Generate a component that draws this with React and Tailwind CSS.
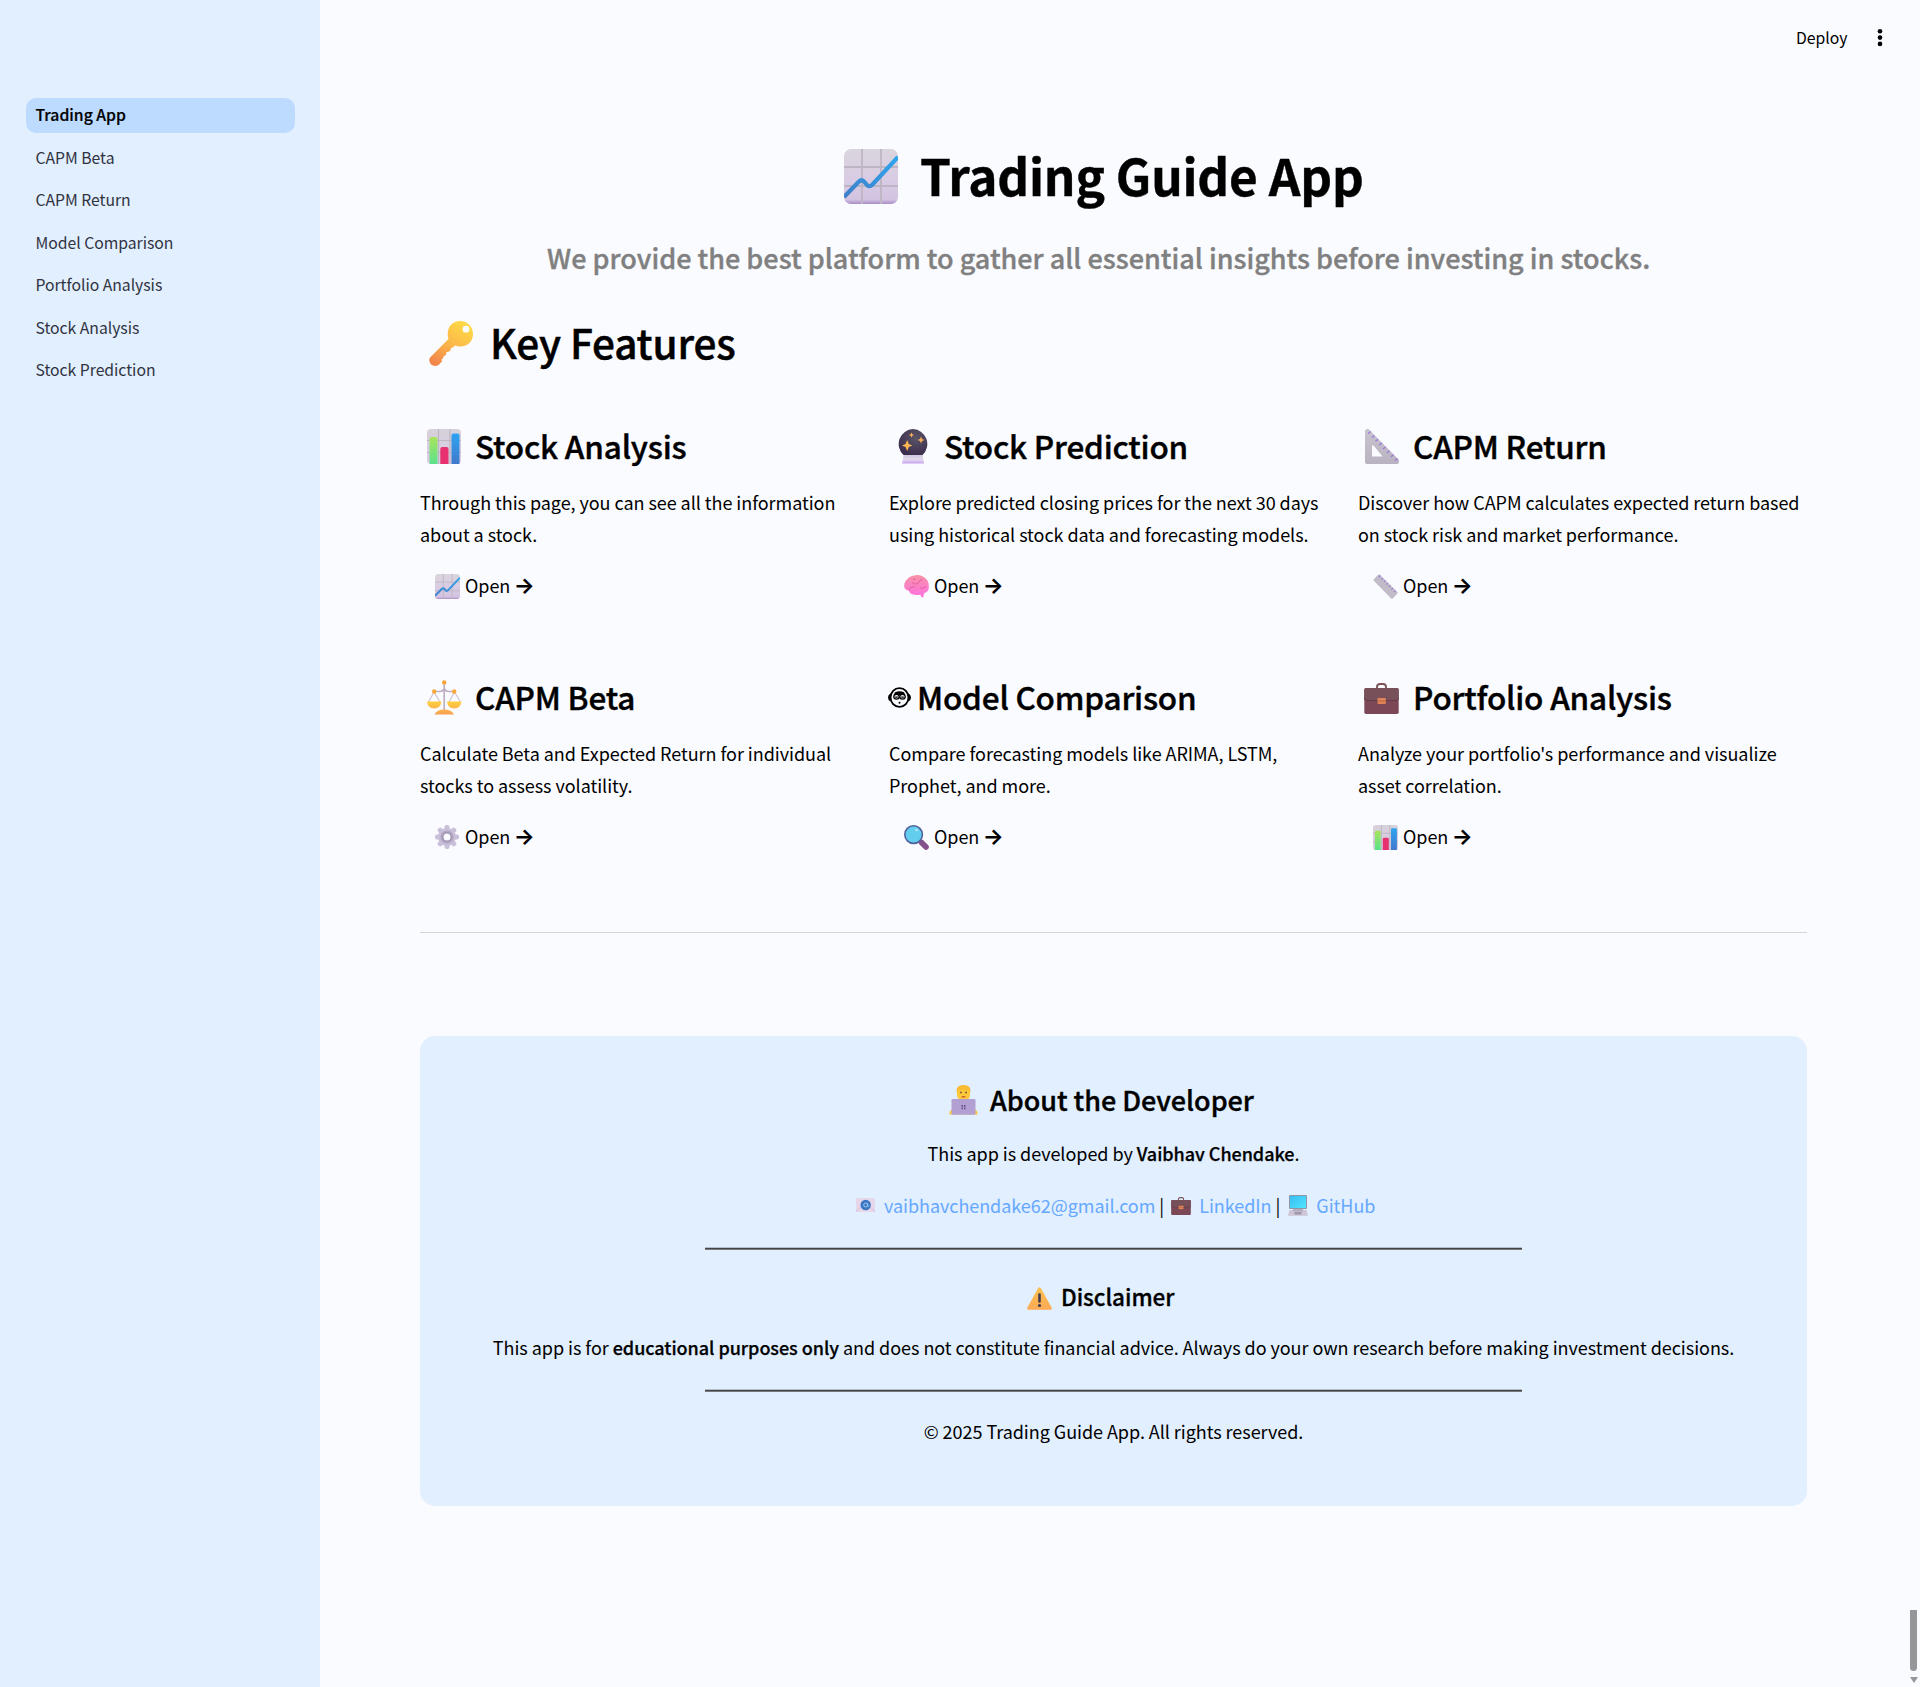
function ChartUp({ className }) {
  return (
    <svg className={className} viewBox="0 0 54 55" preserveAspectRatio="none">
      <defs>
        <linearGradient id="paper" x1="0" y1="0" x2="0" y2="1">
          <stop offset="0" stopColor="#dad5dd" />
          <stop offset="0.6" stopColor="#d8cbe4" />
          <stop offset="0.92" stopColor="#d2c3e0" />
          <stop offset="1" stopColor="#a98bc9" />
        </linearGradient>
        <linearGradient id="trend" x1="0" y1="1" x2="1" y2="0">
          <stop offset="0" stopColor="#3f7fc9" />
          <stop offset="1" stopColor="#2da6ee" />
        </linearGradient>
      </defs>
      <rect width="54" height="55" rx="7" fill="url(#paper)" />
      <path d="M18 0V55M37 0V55M0 18H54M0 37H54" stroke="#bdb5c3" strokeWidth="1.8" />
      <path d="M0 48L15 32.5Q17.500 30 20 32.500L23 36Q25.500 38.500 28.500 35.500L54 8" fill="none" stroke="url(#trend)" strokeWidth="4.200" />
    </svg>
  );
}

function BarChart({ className }) {
  return (
    <svg className={className} viewBox="0 0 34 35" preserveAspectRatio="none">
      <defs>
        <linearGradient id="barPaper" x1="0" y1="0" x2="0" y2="1">
          <stop offset="0" stopColor="#d6d1da" />
          <stop offset="1" stopColor="#d9cce6" />
        </linearGradient>
        <linearGradient id="barGreen" x1="0" y1="0" x2="0" y2="1">
          <stop offset="0" stopColor="#a9e45c" />
          <stop offset="1" stopColor="#5be28d" />
        </linearGradient>
        <linearGradient id="barBlue" x1="0" y1="0" x2="0" y2="1">
          <stop offset="0" stopColor="#2ea3f2" />
          <stop offset="1" stopColor="#4079cb" />
        </linearGradient>
      </defs>
      <rect width="34" height="35" rx="4" fill="url(#barPaper)" />
      <path d="M11.500 0V35M23 0V35M0 11.500H34M0 23.500H34" stroke="#bdb5c3" strokeWidth="1.200" />
      <path d="M2.500 35V10Q2.500 8 4.500 8H8.500Q10.500 8 10.500 10V35Z" fill="url(#barGreen)" />
      <path d="M13.300 35V20Q13.300 18 15.300 18H19.500Q21.500 18 21.500 20V35Z" fill="#e6306f" />
      <path d="M24.500 35V6.500Q24.500 4.500 26.500 4.500H30.500Q32.500 4.500 32.500 6.500V35Z" fill="url(#barBlue)" />
    </svg>
  );
}

function Key({ className }) {
  return (
    <svg className={className} viewBox="0 0 44 45">
      <defs>
        <linearGradient id="keyGold" x1="0.800" y1="0" x2="0.200" y2="1">
          <stop offset="0" stopColor="#ffdc45" />
          <stop offset="0.500" stopColor="#fbb84a" />
          <stop offset="1" stopColor="#f2854b" />
        </linearGradient>
      </defs>
      <path fillRule="evenodd" fill="url(#keyGold)" d="M31 0C38.500 0 44 5.500 44 13C44 20.500 38.500 25.500 31.500 25.500C29 25.500 27.500 25 26 24.500L24 26.500L22 27L21.500 29.500L19 31L17.500 31L17 34L14.500 35.500L14 37.500L12.500 38.500L13 40.500L9.500 44Q5.500 46 2 43.500Q-1 40 1 36.500L19.500 18Q18.500 15.500 18.800 12C19 5 24 0 31 0ZM37 4.800A3.400 3.400 0 1 0 37 11.600A3.400 3.400 0 1 0 37 4.800Z" />
    </svg>
  );
}

function CrystalBall({ className }) {
  return (
    <svg className={className} viewBox="0 0 30 35">
      <defs>
        <radialGradient id="orb" cx="0.600" cy="0.350" r="0.700">
          <stop offset="0" stopColor="#5b5568" />
          <stop offset="1" stopColor="#3b2d4d" />
        </radialGradient>
        <linearGradient id="orbBase" x1="0" y1="0" x2="0" y2="1">
          <stop offset="0" stopColor="#cfc6dc" />
          <stop offset="0.600" stopColor="#e4d9ee" />
          <stop offset="1" stopColor="#c6a0ee" />
        </linearGradient>
      </defs>
      <path d="M6 25H24.500L26 34.500H4Z" fill="url(#orbBase)" />
      <path d="M15 0A15 15 0 0 1 24.500 26H5.500A15 15 0 0 1 15 0Z" fill="url(#orb)" />
      <path d="M9.200 11L10.800 15L14.300 16.500L10.800 18L9.200 22L7.600 18L4 16.500L7.600 15Z" fill="#ffb452" />
      <path d="M13.500 3.500L14.300 5.200L16 6L14.300 6.800L13.500 8.500L12.700 6.800L11 6L12.700 5.200Z" fill="#ffb452" />
      <path d="M23 7.500L24 10L26.500 11L24 12L23 14.500L22 12L19.500 11L22 10Z" fill="#f9ae55" />
    </svg>
  );
}

function SetSquare({ className }) {
  return (
    <svg className={className} viewBox="0 0 34 35">
      <defs>
        <linearGradient id="square" x1="0" y1="0" x2="0" y2="1">
          <stop offset="0" stopColor="#c9c4cf" />
          <stop offset="1" stopColor="#b9b2c1" />
        </linearGradient>
      </defs>
      <path fillRule="evenodd" fill="url(#square)" d="M0 2Q0 0 2 0H3.500L34 31V33Q34 35 32 35H2Q0 35 0 33ZM7 17V27.500H17.500L9 17Q7.500 15.500 7 17Z" />
      <path d="M3.200 4.500L5.700 2.500M7 8.500L9.500 6.500M10.500 12.200L13 10.200M14.300 16L16.800 14M18 20L20.500 18M22 23.700L24.500 21.700M26 27.700L28.500 25.700M30 31.500L32.500 29.500" stroke="#9a78dd" strokeWidth="1.400" />
    </svg>
  );
}

function Brain({ className }) {
  return (
    <svg className={className} viewBox="0 0 25 23">
      <defs>
        <linearGradient id="brain" x1="0" y1="0" x2="0" y2="1">
          <stop offset="0" stopColor="#f792a6" />
          <stop offset="1" stopColor="#ff70e2" />
        </linearGradient>
      </defs>
      <path d="M11 0.500C14 -0.500 18 0.500 20.500 2.500C23 4 25 7.500 24.800 11C25 14.500 24 17 20.500 18L19.500 20V22.500L17 21.800L16.500 19.500C14 20.500 12 20 10 19.500C7 19.500 5 17.500 5 15.500C2 15.500 0 13.500 0.200 10.500C0.200 7.500 2 5 3.500 4C5 2 8 0.500 11 0.500Z" fill="url(#brain)" />
      <path d="M5 15.500C5.500 12.500 8 11.500 10.500 12M8 7C9.500 9.500 13 9.500 15 7.500M15 7.500C15 5.500 17 4.500 18.500 5M16 12.500C18 14 20.500 13 22 11M12 3.500C11 4.500 10 4.500 9 4" fill="none" stroke="#d9559a" strokeWidth="1" opacity="0.800" />
    </svg>
  );
}

function Ruler({ className }) {
  return (
    <svg className={className} viewBox="0 0 25 25">
      <path d="M0.800 5.200L5.200 0.700Q6 0 6.800 0.700L24.400 18Q25 18.800 24.400 19.500L19.700 24.400Q19 25 18.200 24.400L0.800 6.800Q0 6 0.800 5.200Z" fill="#c2bcc9" />
      <path d="M7.500 1.500L5.700 3.300M10 4L8.300 5.700M12.500 6.500L10.800 8.200M15 9L13.300 10.700M17.500 11.500L15.800 13.200M20 14L18.300 15.700M22.500 16.500L20.800 18.200" stroke="#9d80d8" strokeWidth="1.100" />
    </svg>
  );
}

function Scales({ className }) {
  return (
    <svg className={className} viewBox="0 0 35 35">
      <defs>
        <linearGradient id="pan" x1="0" y1="0" x2="0" y2="1">
          <stop offset="0" stopColor="#ffcf3e" />
          <stop offset="1" stopColor="#f9a052" />
        </linearGradient>
      </defs>
      <path d="M7 12L1.500 22M7 12L13 22M27.500 12L22 22M27.500 12L33.500 22" stroke="#cdbfd0" strokeWidth="1.100" />
      <path d="M17.200 4V30M7.500 11.500H13Q16 11.500 17.200 8.500Q18.500 11.500 21.500 11.500H27" fill="none" stroke="#bfaec4" strokeWidth="1.700" />
      <path d="M0 21.500H14.500Q13.500 28.500 7.200 28.500Q1 28.500 0 21.500ZM20 21.500H34.500Q33.500 28.500 27.200 28.500Q21 28.500 20 21.500ZM7.500 34.500Q10 29.500 17 29.500Q24.500 29.500 27 34.500Z" fill="url(#pan)" />
      <circle cx="17.200" cy="2.500" r="2.200" fill="#f7a33c" />
      <circle cx="7.200" cy="11.500" r="2.200" fill="#f9a93a" />
      <circle cx="27.200" cy="11.500" r="2.200" fill="#f9a93a" />
    </svg>
  );
}

function Gear({ className }) {
  return (
    <svg className={className} viewBox="0 0 24 24">
      <g fill="#c9bfd9">
        <circle cx="12" cy="12" r="9" />
        {[0, 45, 90, 135, 180, 225, 270, 315].map((a) => (
          <rect key={a} x="9.500" y="0" width="5" height="6" rx="2" transform={`rotate(${a} 12 12)`} />
        ))}
      </g>
      <circle cx="12" cy="12" r="6.600" fill="#b3a8c3" />
      <circle cx="12" cy="12" r="4.300" fill="#fafbff" stroke="#a195b2" strokeWidth="1.600" />
    </svg>
  );
}

function Robot({ className }) {
  return (
    <svg className={className} viewBox="0 0 23 21">
      <path d="M2.400 6.500Q0 8 0 10.500Q0 13 2.400 14.500ZM20.600 6.500Q23 8 23 10.500Q23 13 20.600 14.500Z" />
      <ellipse cx="11.500" cy="10.500" rx="9" ry="9.400" fill="none" stroke="#000" strokeWidth="1.900" />
      <path d="M7 5.300Q11.500 3.200 16 5.300L17.300 8H5.700Z" />
      <ellipse cx="8.500" cy="9.700" rx="2.700" ry="2.400" fill="#fafbff" stroke="#000" strokeWidth="1.300" />
      <ellipse cx="14.500" cy="9.700" rx="2.700" ry="2.400" fill="#fafbff" stroke="#000" strokeWidth="1.300" />
      <path d="M7.200 10.200H9.800M13.200 10.200H15.800" stroke="#000" strokeWidth="1.300" />
      <circle cx="11.500" cy="15.700" r="1" />
    </svg>
  );
}

function Magnifier({ className }) {
  return (
    <svg className={className} viewBox="0 0 25 25">
      <path d="M17.500 17.500L22 22" stroke="#86508c" strokeWidth="5.600" strokeLinecap="round" />
      <circle cx="9.600" cy="9.600" r="8.800" fill="#63cdee" stroke="#50619b" strokeWidth="1.600" />
      <ellipse cx="12.600" cy="5" rx="1.600" ry="1.200" fill="#a9e7f7" />
    </svg>
  );
}

function Briefcase({ className }) {
  return (
    <svg className={className} viewBox="0 0 35 31" preserveAspectRatio="none">
      <path d="M13 6V4Q13 1 16 1H19Q22 1 22 4V6" fill="none" stroke="#7d5257" strokeWidth="1.900" />
      <rect x="0.300" y="5" width="34.400" height="26" rx="1.800" fill="#7c4858" />
      <path d="M0.300 6.800Q0.300 5 2 5H33Q34.700 5 34.700 6.800V15Q34.700 17.500 32 17.500H3Q0.300 17.500 0.300 15Z" fill="#78505a" />
      <path d="M0.300 15Q0.500 17.500 3 17.500H32Q34.500 17.500 34.700 15" fill="none" stroke="#5f3644" strokeWidth="0.800" />
      <rect x="13.500" y="15" width="8.300" height="6" rx="0.800" fill="#e08457" />
      <path d="M13.500 18H21.800" stroke="#a85a45" strokeWidth="0.700" />
    </svg>
  );
}

function Technologist({ className }) {
  return (
    <svg className={className} viewBox="0 0 29 30">
      <path d="M0.500 29.500Q0 25 4 24.500H25Q29 25 28.500 29.500Z" fill="#fbc53c" />
      <path d="M8 5Q8 0.500 14.500 0.500Q21 0.500 21 5V10Q21 15.500 14.500 15.500Q8 15.500 8 10Z" fill="#fdc83a" />
      <path d="M7.500 7Q7 0 14.500 0Q22 0 21.500 7L19.500 5H9.500Z" fill="#f8bb34" />
      <path d="M11 7.500H12.800M16.200 7.500H18" stroke="#7b553e" strokeWidth="1.500" />
      <path d="M12.700 11.800H16.300" stroke="#c4532f" strokeWidth="1.300" />
      <rect x="2.500" y="14" width="24" height="15.700" rx="1.300" fill="#b3a0d3" />
      <path d="M12.500 20h1.500v1.700h-1.500zM15 20h1.500v1.700h-1.500zM12.500 22.500h1.500v1.700h-1.500zM15 22.500h1.500v1.700h-1.500z" fill="#6a4a88" />
    </svg>
  );
}

function Mail({ className }) {
  return (
    <svg className={className} viewBox="0 0 19 14">
      <rect width="19" height="14" rx="0.600" fill="#e6d8ea" />
      <path d="M0 13.500L6 8M19 13.500L13 8" stroke="#cfbcdc" strokeWidth="0.900" />
      <circle cx="9.700" cy="7" r="5.200" fill="#3a78c4" />
      <circle cx="9.700" cy="7" r="2" fill="none" stroke="#a9cdf2" strokeWidth="0.900" />
      <path d="M11.700 5.200V8Q12.500 9 13.300 7.500" fill="none" stroke="#a9cdf2" strokeWidth="0.800" />
    </svg>
  );
}

function Computer({ className }) {
  return (
    <svg className={className} viewBox="0 0 20 21">
      <defs>
        <linearGradient id="screen" x1="0" y1="0" x2="1" y2="1">
          <stop offset="0" stopColor="#38bdf3" />
          <stop offset="1" stopColor="#4fe6ff" />
        </linearGradient>
      </defs>
      <rect x="1" y="0" width="18" height="14" rx="0.800" fill="#8f96a8" />
      <rect x="2" y="1" width="16" height="12" fill="url(#screen)" />
      <path d="M1.500 15H18.500L20 20.700H0Z" fill="#cdc5d6" />
      <path d="M5 14H15V16.500H5Z" fill="#b4acbf" />
      <path d="M6.500 17H13.500V19.500H6.500Z" fill="#9f98ad" />
    </svg>
  );
}

function Warning({ className }) {
  return (
    <svg className={className} viewBox="0 0 25 23">
      <defs>
        <linearGradient id="warn" x1="0" y1="0" x2="0" y2="1">
          <stop offset="0" stopColor="#f8c24f" />
          <stop offset="1" stopColor="#fda956" />
        </linearGradient>
      </defs>
      <path d="M11.200 1Q12.500 -0.700 13.800 1L24.600 20.500Q25.200 22.700 23.500 22.700H1.500Q-0.200 22.700 0.400 20.500Z" fill="url(#warn)" />
      <path d="M12.500 7.500V14.500" stroke="#433b4d" strokeWidth="2.600" strokeLinecap="round" />
      <circle cx="12.500" cy="18.500" r="1.600" fill="#433b4d" />
    </svg>
  );
}

const pages = ["Trading App", "CAPM Beta", "CAPM Return", "Model Comparison", "Portfolio Analysis", "Stock Analysis", "Stock Prediction"];

const features = [
  { title: "Stock Analysis", icon: <BarChart className="ml-[6.5px] mr-[14.5px] mt-[3px] h-[35px] w-[34px]" />, lines: ["Through this page, you can see all the information", "about a stock."], link: <ChartUp className="h-[25px] w-[25px]" /> },
  { title: "Stock Prediction", icon: <CrystalBall className="ml-[9px] mr-[16px] mt-[3px] h-[35px] w-[30px]" />, lines: ["Explore predicted closing prices for the next 30 days", "using historical stock data and forecasting models."], link: <Brain className="h-[23px] w-[25px]" /> },
  { title: "CAPM Return", icon: <SetSquare className="ml-[6.5px] mr-[14.5px] mt-[3px] h-[35px] w-[34px]" />, lines: ["Discover how CAPM calculates expected return based", "on stock risk and market performance."], link: <Ruler className="h-[25px] w-[25px]" /> },
  { title: "CAPM Beta", icon: <Scales className="ml-[6.5px] mr-[13.5px] mt-[3px] h-[35px] w-[35px]" />, lines: ["Calculate Beta and Expected Return for individual", "stocks to assess volatility."], link: <Gear className="h-[24px] w-[24px]" /> },
  { title: "Model Comparison", icon: <Robot className="-ml-[1px] mr-[6px] mt-[2px] h-[21px] w-[23px]" />, lines: ["Compare forecasting models like ARIMA, LSTM,", "Prophet, and more."], link: <Magnifier className="h-[25px] w-[25px]" /> },
  { title: "Portfolio Analysis", icon: <Briefcase className="ml-[6px] mr-[14px] mt-[5px] h-[31px] w-[35px]" />, lines: ["Analyze your portfolio's performance and visualize", "asset correlation."], link: <BarChart className="h-[25px] w-[25px]" /> },
];

function Sidebar() {
  return (
    <aside className="w-[320px] shrink-0 bg-[#e1efff] px-[26px] pt-[98px]">
      <nav className="flex w-[269px] flex-col gap-[7.5px]">
        {pages.map((p, i) => (
          <a
            key={p}
            className={
              i === 0
                ? "h-[35px] rounded-[10px] bg-[#bddaff] pl-[9.5px] text-[15.75px] leading-[33px] font-medium text-black [-webkit-text-stroke:0.2px_currentColor]"
                : "h-[35px] pl-[9.5px] text-[15.75px] leading-[33px] tracking-[-0.03px] text-[#31333f]"
            }
          >
            {p}
          </a>
        ))}
      </nav>
    </aside>
  );
}

function Feature({ title, icon, lines, link }) {
  return (
    <section className="w-[449px]">
      <h3 className="flex h-[42px] items-center text-[31.5px] leading-[42px] font-medium tracking-[-0.2px] whitespace-nowrap [-webkit-text-stroke:0.4px_currentColor]">
        {icon}
        <span>{title}</span>
      </h3>
      <p className="mt-[20px] text-[18px] leading-[32px] tracking-[-0.05px] whitespace-nowrap">
        {lines[0]}
        <br />
        {lines[1]}
      </p>
      <a className="mt-[19px] flex h-[32px] items-center pl-[15px] text-[18px] leading-[32px] tracking-[-0.05px]">
        <span className="mt-[2px] flex w-[25px] items-center">{link}</span>
        <span className="ml-[5px]">Open</span>
        <span className="ml-[3.5px] font-['Inter'] text-[22px] font-bold">→</span>
      </a>
    </section>
  );
}

function Rule({ className }) {
  return (
    <div className={className}>
      <div className="ml-[285px] h-[3px] w-[817px] border-t border-b border-t-[#b4bfcc] border-b-[#77797d] bg-[#444]" />
    </div>
  );
}

function Footer() {
  return (
    <footer className="mt-[103px] h-[470px] w-[1387px] rounded-[15px] bg-[#e1efff] pt-[46px] text-[18px] leading-[32px] tracking-[-0.045px] whitespace-nowrap">
      <h3 className="flex h-[36px] items-center pl-[529px] text-[27px] leading-[36px] font-medium [-webkit-text-stroke:0.35px_currentColor]">
        <Technologist className="mr-[12px] h-[30px] w-[29px]" />
        <span>About the Developer</span>
      </h3>
      <p className="mt-[19px] text-center">
        This app is developed by <b className="font-medium [-webkit-text-stroke:0.25px_currentColor]">Vaibhav Chendake</b>.
      </p>
      <p className="mt-[20px] flex items-center pl-[436px]">
        <Mail className="h-[14px] w-[19px]" />
        <a className="ml-[9px] text-[#66a8ff]">vaibhavchendake62@gmail.com</a>
        <span className="ml-[4px]">|</span>
        <Briefcase className="ml-[7px] mt-[2px] h-[18px] w-[20px]" />
        <a className="ml-[8px] text-[#66a8ff]">LinkedIn</a>
        <span className="ml-[4px]">|</span>
        <Computer className="ml-[8px] h-[21px] w-[20px]" />
        <a className="ml-[8px] text-[#66a8ff]">GitHub</a>
      </p>
      <Rule className="mt-[26px]" />
      <h4 className="mt-[31px] flex h-[30px] items-center pl-[606.5px] text-[22.5px] leading-[30px] font-medium [-webkit-text-stroke:0.3px_currentColor]">
        <Warning className="mr-[9.5px] mt-[4px] h-[23px] w-[25px]" />
        <span>Disclaimer</span>
      </h4>
      <p className="mt-[20px] text-center">
        This app is for <b className="font-medium [-webkit-text-stroke:0.25px_currentColor]">educational purposes only</b> and does not constitute financial advice. Always do your own research before making investment decisions.
      </p>
      <Rule className="mt-[26px]" />
      <p className="mt-[23px] text-center">© 2025 Trading Guide App. All rights reserved.</p>
    </footer>
  );
}

export default function App() {
  return (
    <div className="flex h-[1687px] w-[1920px] overflow-hidden bg-[#fafbff] font-['Noto_Sans_CJK_SC','Noto_Sans',sans-serif] text-black">
      <Sidebar />
      <main className="relative w-[1600px] pl-[100px]">
        <header className="flex h-[142px] items-start pt-[22px] pl-[1376px] text-[15.75px] leading-[32px]">
          <span>Deploy</span>
          <svg className="ml-[29.5px] mt-[6px] h-[20px] w-[6px]" viewBox="0 0 6 20">
            <circle cx="3" cy="3.300" r="2.300" />
            <circle cx="3" cy="9.600" r="2.300" />
            <circle cx="3" cy="15.900" r="2.300" />
          </svg>
        </header>
        <h1 className="flex h-[66px] items-center pl-[424px] text-[49.5px] leading-[66px] font-bold tracking-[-0.18px] whitespace-nowrap [-webkit-text-stroke:0.4px_currentColor]">
          <ChartUp className="mr-[22px] mt-[2px] h-[55px] w-[54px]" />
          <span>Trading Guide App</span>
        </h1>
        <p className="mt-[32px] h-[36px] pl-[127px] text-[27px] leading-[36px] font-medium whitespace-nowrap text-[#808080] [-webkit-text-stroke:0.35px_currentColor]">
          We provide the best platform to gather all essential insights before investing in stocks.
        </p>
        <h2 className="mt-[39px] flex h-[54px] items-center text-[40.5px] leading-[54px] font-medium tracking-[-0.15px] [-webkit-text-stroke:0.5px_currentColor]">
          <Key className="ml-[9px] mr-[17px] mt-[3px] h-[45px] w-[44px]" />
          <span>Key Features</span>
        </h2>
        <div className="mt-[55px] grid w-[1387px] grid-cols-3 gap-x-[20px] gap-y-[74px]">
          {features.map((f) => (
            <Feature key={f.title} {...f} />
          ))}
        </div>
        <hr className="mt-[80px] w-[1387px] border-t-[1px] border-[#d0d5dc]" />
        <Footer />
        <div className="absolute right-[3px] bottom-[16px] h-[61px] w-[7px] rounded-b-full bg-[#949698]" />
        <svg className="absolute right-[2px] bottom-[4px] h-[6px] w-[8px]" viewBox="0 0 8 6">
          <path d="M0 0H8L4 6Z" fill="#949698" />
        </svg>
      </main>
    </div>
  );
}
